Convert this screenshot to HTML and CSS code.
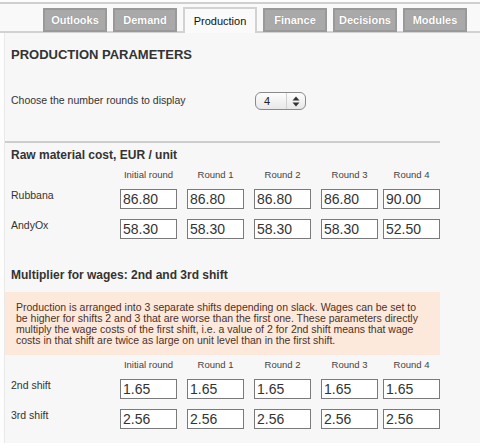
FILE: index.html
```html
<!DOCTYPE html>
<html>
<head>
<meta charset="utf-8">
<link rel="stylesheet" href="styles.css">
</head>
<body>
<div class="tabbar">
  <div class="tab">Outlooks</div>
  <div class="tab">Demand</div>
  <div class="tab active">Production</div>
  <div class="tab">Finance</div>
  <div class="tab">Decisions</div>
  <div class="tab">Modules</div>
</div>
<div class="content">
  <h1 class="title">PRODUCTION PARAMETERS</h1>
  <div class="rounds-row">
    <span class="rounds-label">Choose the number rounds to display</span>
    <div class="select">
      <span class="select-value">4</span>
      <span class="select-arrows">
        <svg width="8" height="11" viewBox="0 0 8 11"><path d="M4 0.5 L7.5 4.5 H0.5 Z M4 10.5 L7.5 6.5 H0.5 Z" fill="#333"/></svg>
      </span>
    </div>
  </div>
  <div class="separator"></div>

  <h2 class="section-title">Raw material cost, EUR / unit</h2>
  <div class="grid">
    <div></div>
    <div class="colhead">Initial round</div>
    <div class="colhead">Round 1</div>
    <div class="colhead">Round 2</div>
    <div class="colhead">Round 3</div>
    <div class="colhead">Round 4</div>

    <div class="rowlabel">Rubbana</div>
    <input class="cell" value="86.80">
    <input class="cell" value="86.80">
    <input class="cell" value="86.80">
    <input class="cell" value="86.80">
    <input class="cell" value="90.00">

    <div class="rowlabel">AndyOx</div>
    <input class="cell" value="58.30">
    <input class="cell" value="58.30">
    <input class="cell" value="58.30">
    <input class="cell" value="58.30">
    <input class="cell" value="52.50">
  </div>

  <h2 class="section-title second">Multiplier for wages: 2nd and 3rd shift</h2>
  <div class="note">Production is arranged into 3 separate shifts depending on slack. Wages can be set to be higher for shifts 2 and 3 that are worse than the first one. These parameters directly multiply the wage costs of the first shift, i.e. a value of 2 for 2nd shift means that wage costs in that shift are twice as large on unit level than in the first shift.</div>
  <div class="grid grid2">
    <div></div>
    <div class="colhead">Initial round</div>
    <div class="colhead">Round 1</div>
    <div class="colhead">Round 2</div>
    <div class="colhead">Round 3</div>
    <div class="colhead">Round 4</div>

    <div class="rowlabel">2nd shift</div>
    <input class="cell" value="1.65">
    <input class="cell" value="1.65">
    <input class="cell" value="1.65">
    <input class="cell" value="1.65">
    <input class="cell" value="1.65">

    <div class="rowlabel">3rd shift</div>
    <input class="cell" value="2.56">
    <input class="cell" value="2.56">
    <input class="cell" value="2.56">
    <input class="cell" value="2.56">
    <input class="cell" value="2.56">
  </div>
</div>
</body>
</html>
```

FILE: styles.css
```css
html, body {
  margin: 0;
  padding: 0;
  background: #fdfdfd;
  font-family: "Liberation Sans", Arial, sans-serif;
  color: #333;
  width: 480px;
  height: 443px;
  overflow: hidden;
}

.tabbar {
  margin-top: 2px;
  border-top: 2px solid #cfcfcf;
  border-bottom: 2px solid #d2d2d2;
  height: 27px;
  padding-left: 43px;
  display: flex;
  align-items: flex-end;
  gap: 6px;
  background: #f9f9f9;
}

.tab {
  box-sizing: border-box;
  width: 64px;
  height: 24px;
  margin-bottom: -1px;
  background: #a9a9a9;
  border: 2px solid #999;
  color: #fff;
  font-size: 11px;
  font-weight: bold;
  display: flex;
  align-items: center;
  justify-content: center;
  text-shadow: 0 0 1px rgba(0,0,0,0.25);
}

.tab.active {
  width: 74px;
  height: 26px;
  margin-bottom: -2px;
  background: #fafafa;
  border: 2px solid #d2d2d2;
  border-bottom: none;
  color: #111;
  font-weight: normal;
  text-shadow: none;
  padding-bottom: 1px;
}

.content {
  margin-left: 4px;
  border-left: 1px solid #e9e9e9;
  background: #f7f7f7;
  height: 420px;
  padding-left: 0;
}

.title {
  margin: 0;
  padding: 14px 0 0 6px;
  font-size: 13px;
  line-height: 16px;
  font-weight: bold;
  color: #333;
}

.rounds-row {
  display: flex;
  align-items: center;
  margin-top: 29px;
  padding-left: 6px;
  height: 18px;
}

.rounds-label {
  font-size: 10.5px;
  width: 244px;
  margin-top: -3px;
}

.select {
  box-sizing: border-box;
  width: 51px;
  height: 18px;
  border: 1px solid #8a8a8a;
  border-radius: 6px;
  background: linear-gradient(#fdfdfd, #e8e8e8);
  display: flex;
  align-items: stretch;
}

.select-value {
  flex: 1;
  font-size: 11px;
  padding-left: 8px;
  display: flex;
  align-items: center;
  color: #222;
  border-right: 1px solid #d0d0d0;
}

.select-arrows {
  width: 18px;
  display: flex;
  align-items: center;
  justify-content: center;
}

.separator {
  margin-top: 31px;
  width: 435px;
  height: 2px;
  background: #cdcdcd;
}

.section-title {
  margin: 0;
  padding-left: 6px;
  font-size: 12px;
  line-height: 15px;
  font-weight: bold;
  color: #333;
  margin-top: 5px;
}

.section-title.second {
  margin-top: 19px;
}

.grid {
  display: grid;
  grid-template-columns: 109px 67px 67px 67px 62px 57px;
  grid-template-rows: 20px 30px 30px;
  padding-left: 6px;
  margin-top: 6px;
}

.grid2 {
  margin-top: 4px;
}

.colhead {
  width: 57px;
  text-align: center;
  font-size: 9.5px;
  line-height: 12px;
  color: #444;
  white-space: nowrap;
}

.rowlabel {
  font-size: 10.5px;
  line-height: 13px;
  padding-top: 0;
}

.cell {
  box-sizing: border-box;
  width: 57px;
  height: 20px;
  margin: 0;
  border: 1px solid #7a7a7a;
  background: #fff;
  font-family: "Liberation Sans", Arial, sans-serif;
  font-size: 14px;
  color: #333;
  padding: 0 0 0 2px;
  outline: none;
}

.note {
  margin-top: 9px;
  width: 435px;
  box-sizing: border-box;
  background: #fde8dc;
  padding: 10px 12px 9px 11px;
  font-size: 10.5px;
  line-height: 11px;
  color: #4a3328;
}
```
